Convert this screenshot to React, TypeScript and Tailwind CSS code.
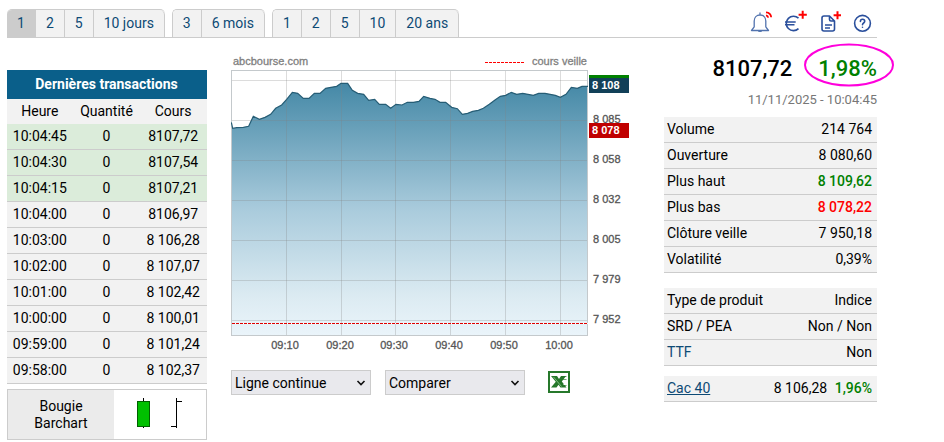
import React from "react";

const tabGroups = [
  { name: "Jours", tabs: ["1", "2", "5", "10 jours"] },
  { name: "Mois", tabs: ["3", "6 mois"] },
  { name: "Années", tabs: ["1", "2", "5", "10", "20 ans"] },
];

const trades = [
  ["10:04:45", "8107,72", true],
  ["10:04:30", "8107,54", true],
  ["10:04:15", "8107,21", true],
  ["10:04:00", "8106,97", false],
  ["10:03:00", "8 106,28", false],
  ["10:02:00", "8 107,07", false],
  ["10:01:00", "8 102,42", false],
  ["10:00:00", "8 100,01", false],
  ["09:59:00", "8 101,24", false],
  ["09:58:00", "8 102,37", false],
] as const;

// Curve samples, in thirds of a chart unit.
const samples = [
  [1, 202], [5, 220], [17, 218], [37, 217], [53, 214], [67, 184], [85, 193], [102, 187], [119, 178],
  [134, 160], [152, 150], [167, 133], [184, 112], [200, 115], [217, 130], [234, 130], [250, 115],
  [267, 115], [284, 100], [300, 97], [317, 94], [330, 85], [350, 85], [364, 106], [380, 115],
  [398, 118], [413, 136], [431, 133], [445, 148], [464, 148], [479, 160], [495, 148], [513, 150],
  [529, 142], [547, 142], [564, 139], [578, 124], [597, 130], [612, 133], [627, 142], [644, 142],
  [662, 157], [679, 161], [694, 178], [710, 175], [725, 169], [742, 166], [757, 160], [775, 148],
  [792, 135], [808, 124], [824, 121], [841, 112], [857, 118], [875, 115], [907, 121], [923, 115],
  [942, 115], [973, 121], [988, 127], [1005, 118], [1021, 97], [1039, 100], [1053, 94], [1071, 94],
];
const curve = samples.map(([x, y]) => `${x / 3},${y / 3}`).join(" ");

const times: [number, string][] = [
  [55, "09:10"], [110, "09:20"], [164, "09:30"], [219, "09:40"], [274, "09:50"], [329, "10:00"],
];
const levels: [number, string][] = [
  [25, ""], [65, "8 085"], [105, "8 058"], [145, "8 032"], [185, "8 005"], [225, "7 979"], [265, "7 952"],
];

function Chart() {
  return (
    <svg
      viewBox="0 0 398 300"
      className="block h-auto w-full font-['Liberation_Sans',Arial,sans-serif] text-[11px]"
      role="img"
      aria-label="Cours du jour"
    >
      <defs>
        <linearGradient id="area" x1="0" y1="28" x2="0" y2="280" gradientUnits="userSpaceOnUse">
          <stop offset="0" stopColor="#4488a6" />
          <stop offset="0.5" stopColor="#a9cbdc" />
          <stop offset="0.85" stopColor="#dcebf2" />
          <stop offset="1" stopColor="#eaf4fa" />
        </linearGradient>
      </defs>
      <g fill="#808080" stroke="#808080" strokeWidth="0.3">
        <text x="2" y="10">abcbourse.com</text>
        <text x="356" y="10" textAnchor="end">cours veille</text>
      </g>
      <path d="M254 7.500H293" stroke="#f00" strokeDasharray="3 1" />

      <polygon points={`0.5,280 ${curve} 357,280`} fill="url(#area)" />
      <g stroke="#808080" strokeOpacity="0.28">
        {times.map(([x]) => <path key={x} d={`M${x + 0.5} 16V280`} />)}
        {levels.map(([y]) => <path key={y} d={`M1 ${y + 0.5}H356`} />)}
      </g>
      <rect x="0.5" y="15.5" width="356" height="265" fill="none" stroke="#c4c9cc" />
      <polyline points={curve} fill="none" stroke="#265d75" strokeWidth="1.2" />
      <path d="M1 268.500H357" stroke="#fff" />
      <path d="M1 268.500H357" stroke="#e00000" strokeDasharray="3 1" />

      <g fill="#555" stroke="#555" strokeWidth="0.3">
        {levels.map(([y, label]) => <text key={y} x="362" y={y + 3}>{label}</text>)}
        {times.map(([x, label]) => (
          <text key={x} x={x - 1} y="294" textAnchor="middle">{label}</text>
        ))}
      </g>

      <rect x="358" y="20" width="40" height="4" fill="#008000" />
      <rect x="358" y="23" width="40" height="15" fill="#124058" />
      <rect x="358" y="68" width="40" height="15" fill="#c00000" />
      <g fill="#fff" fontWeight="bold">
        <text x="361" y="34">8 108</text>
        <text x="361" y="79">8 078</text>
      </g>
    </svg>
  );
}

function Tools() {
  const button = "block size-6 cursor-pointer";
  return (
    <div className="flex gap-[10px] pr-[2px] pb-[3px]">
      <button type="button" aria-label="Alerte" className={button}>
        <svg viewBox="0 0 24 24" fill="none" stroke="#5273ae" strokeWidth="1.3">
          <path d="M11 2.500V5M2.500 20.500H19.500L16.800 16.800V11C16.800 7.300 14.300 5 11 5S5.200 7.300 5.200 11V16.800Z" strokeLinejoin="round" />
          <path d="M9.300 21.300H12.700" />
          <path d="M17 5.300C18.300 5.500 19 6.300 19.200 7.600M17 2.300C20.200 2.500 22 4.300 22.200 7.300" stroke="#f00" strokeWidth="1.800" />
        </svg>
      </button>
      <button type="button" aria-label="Ajouter au portefeuille" className={button}>
        <svg viewBox="0 0 24 24" fill="none" stroke="#2a4f9c" strokeWidth="1.6">
          <path d="M15.500 8.200A7.200 7.200 0 1 0 15.500 18.600M2 12H12.700M2 14.800H11.500" />
          <path d="M15.600 4.700H23.800M19.700 0.700V8.700" stroke="#f00" strokeWidth="2" />
        </svg>
      </button>
      <button type="button" aria-label="Ajouter une note" className={button}>
        <svg viewBox="0 0 24 24" fill="none" stroke="#2a4f9c" strokeWidth="1.6" strokeLinejoin="round">
          <path d="M12.500 6H7A2 2 0 0 0 5 8V19A2 2 0 0 0 7 21H15.500A2 2 0 0 0 17.500 19V11L12.500 6V9.500A1.500 1.500 0 0 0 14 11H17.500M8 15H15M8 18H13" />
          <path d="M16.600 5.300H24M20.500 1.300V9.300" stroke="#f00" strokeWidth="2" />
        </svg>
      </button>
      <button type="button" aria-label="Aide" className={button}>
        <svg viewBox="0 0 24 24" fill="none" stroke="#2a4f9c" strokeWidth="1.6" strokeLinecap="round">
          <circle cx="11.500" cy="13.300" r="7.900" />
          <path d="M9.400 11.500C9.400 8.400 13.700 8.600 13.700 11.300C13.700 13 11.500 13 11.500 14.700M11.500 17.200V17.300" />
        </svg>
      </button>
    </div>
  );
}

function Picker({ label, options }: { label: string; options: string[] }) {
  return (
    <div className="relative w-[140px]">
      <select
        aria-label={label}
        className="block h-[25px] w-full appearance-none border border-[#ccc] bg-[#e9e9ed] pr-5 pl-[3px] text-sm leading-5 text-black"
      >
        {options.map((o) => <option key={o}>{o}</option>)}
      </select>
      <svg viewBox="0 0 10 6" className="pointer-events-none absolute top-[10px] right-[5px] h-[6px] w-[10px]" fill="none" stroke="#111" strokeWidth="1.600">
        <path d="M1.500 1L5 4.500L8.500 1" />
      </svg>
    </div>
  );
}

type Row = { label: React.ReactNode; value: React.ReactNode };

function Facts({ rows }: { rows: Row[] }) {
  return (
    <table className="w-full border-separate border-spacing-0 bg-[#f2f2f2]">
      <tbody>
        {rows.map((r, i) => (
          <tr key={i}>
            <th scope="row" className="h-[26px] border-b border-[#ccc] p-0 pl-[3px] text-left font-normal">{r.label}</th>
            <td className="h-[26px] border-b border-[#ccc] p-0 pr-[5px] text-right">{r.value}</td>
          </tr>
        ))}
      </tbody>
    </table>
  );
}

export default function App() {
  return (
    <div className="mr-[67px] ml-[7px] bg-white font-[Roboto,sans-serif] text-sm leading-[17px] text-black">
      <header className="flex items-end justify-between border-b border-[#ccc] pt-[9px]">
        <nav className="flex gap-[7px]" aria-label="Période">
          {tabGroups.map((g, gi) => (
            <div
              key={g.name}
              className="flex overflow-hidden rounded-t-[5px] border-t border-l border-[#ccc] first:border-l-0"
            >
              {g.tabs.map((t, ti) => (
                <button
                  key={t}
                  type="button"
                  className={`h-[27px] cursor-pointer border-r border-[#ccc] px-[10px] text-[#0d4a75] last:rounded-tr-[5px] ${
                    gi === 0 && ti === 0 ? "bg-[#ccc]" : "bg-[#f2f2f2]"
                  }`}
                >
                  {t}
                </button>
              ))}
            </div>
          ))}
        </nav>
        <Tools />
      </header>

      <main className="flex items-start">
        <section className="w-[200px] shrink-0 pt-8">
          <table className="w-full table-fixed border-separate border-spacing-0 bg-[#f2f2f2] text-center">
            <caption className="h-[29px] bg-[#0a5f8a] pr-px leading-[29px] font-bold text-white">Dernières transactions</caption>
            <thead>
              <tr>
                {["Heure", "Quantité", "Cours"].map((h) => (
                  <th key={h} scope="col" className="h-[25px] p-0 pr-px font-normal">{h}</th>
                ))}
              </tr>
            </thead>
            <tbody>
              {trades.map(([time, price, fresh]) => (
                <tr key={time} className={fresh ? "bg-[#dbecda]" : ""}>
                  <td className="h-[26px] border-b border-[#ccc] p-0 pr-px">{time}</td>
                  <td className="h-[26px] border-b border-[#ccc] p-0 pr-px">0</td>
                  <td className="h-[26px] border-b border-[#ccc] p-0 pr-px">{price}</td>
                </tr>
              ))}
            </tbody>
          </table>
          <div className="mt-[5px] flex h-[51px] border border-[#ccc]">
            <div className="flex w-[106px] flex-col items-center justify-center bg-[#ebebeb]">
              <span>Bougie</span>
              <span>Barchart</span>
            </div>
            <div className="flex flex-1 items-center justify-center pr-[2px] pb-[4px]">
              <svg viewBox="0 0 46 32" className="h-8 w-[46px]" fill="none" stroke="#000">
                <path d="M7.500 1V31" />
                <rect x="1.500" y="4.500" width="12" height="25" fill="#00c000" stroke="#006000" />
                <path d="M40.500 1V31M40 4.500H46M35 29.500H41" />
              </svg>
            </div>
          </div>
        </section>

        <section className="mr-[35px] ml-6 min-w-0 flex-1 pt-[17px]">
          <Chart />
          <div className="mt-[15px] flex items-center gap-[14px]">
            <Picker label="Type de graphique" options={["Ligne continue", "Bougie", "Barchart"]} />
            <Picker label="Comparer" options={["Comparer", "Cac 40"]} />
            <button type="button" aria-label="Exporter vers Excel" className="mb-[2px] ml-[9px] cursor-pointer">
              <svg viewBox="0 0 22 22" className="block size-[22px]">
                <rect x="1" y="1" width="20" height="20" fill="#fff" stroke="#26782b" strokeWidth="2" />
                <path d="M14 5.500H18.500M14 8.500H18.500M14 14.500H18.500" stroke="#6fae70" />
                <path d="M3 5H9L11 8L13 5H18L13.800 10.500L18.500 16.500H12.500L10.500 13.800L8.500 16.500H3L7.800 10.800Z" fill="#26782b" />
                <path d="M5.500 6L13.500 15.500" stroke="#7dbb7e" />
                <path d="M15 11.500L18.500 11.500M15.500 13.500H18" stroke="#fff" />
              </svg>
            </button>
          </div>
        </section>

        <section className="w-[213px] shrink-0 pt-4">
          <div className="flex justify-end gap-[26px] text-[22px] leading-[30px] font-medium">
            <span>8107,72</span>
            <span className="relative text-[#008000]">
              1,98%
              <svg viewBox="0 0 90 44" className="pointer-events-none absolute -top-[11px] -right-[17px] h-[44px] w-[90px]" fill="none" stroke="#ff00dc" strokeWidth="2">
                <ellipse cx="45" cy="22" rx="44" ry="20.500" />
              </svg>
            </span>
          </div>
          <p className="mt-2 text-right text-[13px] leading-4 text-[#777]">11/11/2025 - 10:04:45</p>
          <div className="mt-[9px]">
            <Facts
              rows={[
                { label: "Volume", value: "214 764" },
                { label: "Ouverture", value: "8 080,60" },
                { label: "Plus haut", value: <span className="font-medium text-[#008000]">8 109,62</span> },
                { label: "Plus bas", value: <span className="font-medium text-[#f00]">8 078,22</span> },
                { label: "Clôture veille", value: "7 950,18" },
                { label: "Volatilité", value: "0,39%" },
              ]}
            />
          </div>
          <div className="mt-[15px]">
            <Facts
              rows={[
                { label: "Type de produit", value: "Indice" },
                { label: "SRD / PEA", value: "Non / Non" },
                { label: <a href="#ttf" className="text-[#0d4a75]">TTF</a>, value: "Non" },
              ]}
            />
          </div>
          <div className="mt-[10px]">
            <Facts
              rows={[
                {
                  label: <a href="#cac40" className="text-[#0d4a75] underline">Cac 40</a>,
                  value: <>8 106,28 <span className="ml-1 font-medium text-[#008000]">1,96%</span></>,
                },
              ]}
            />
          </div>
        </section>
      </main>
    </div>
  );
}
